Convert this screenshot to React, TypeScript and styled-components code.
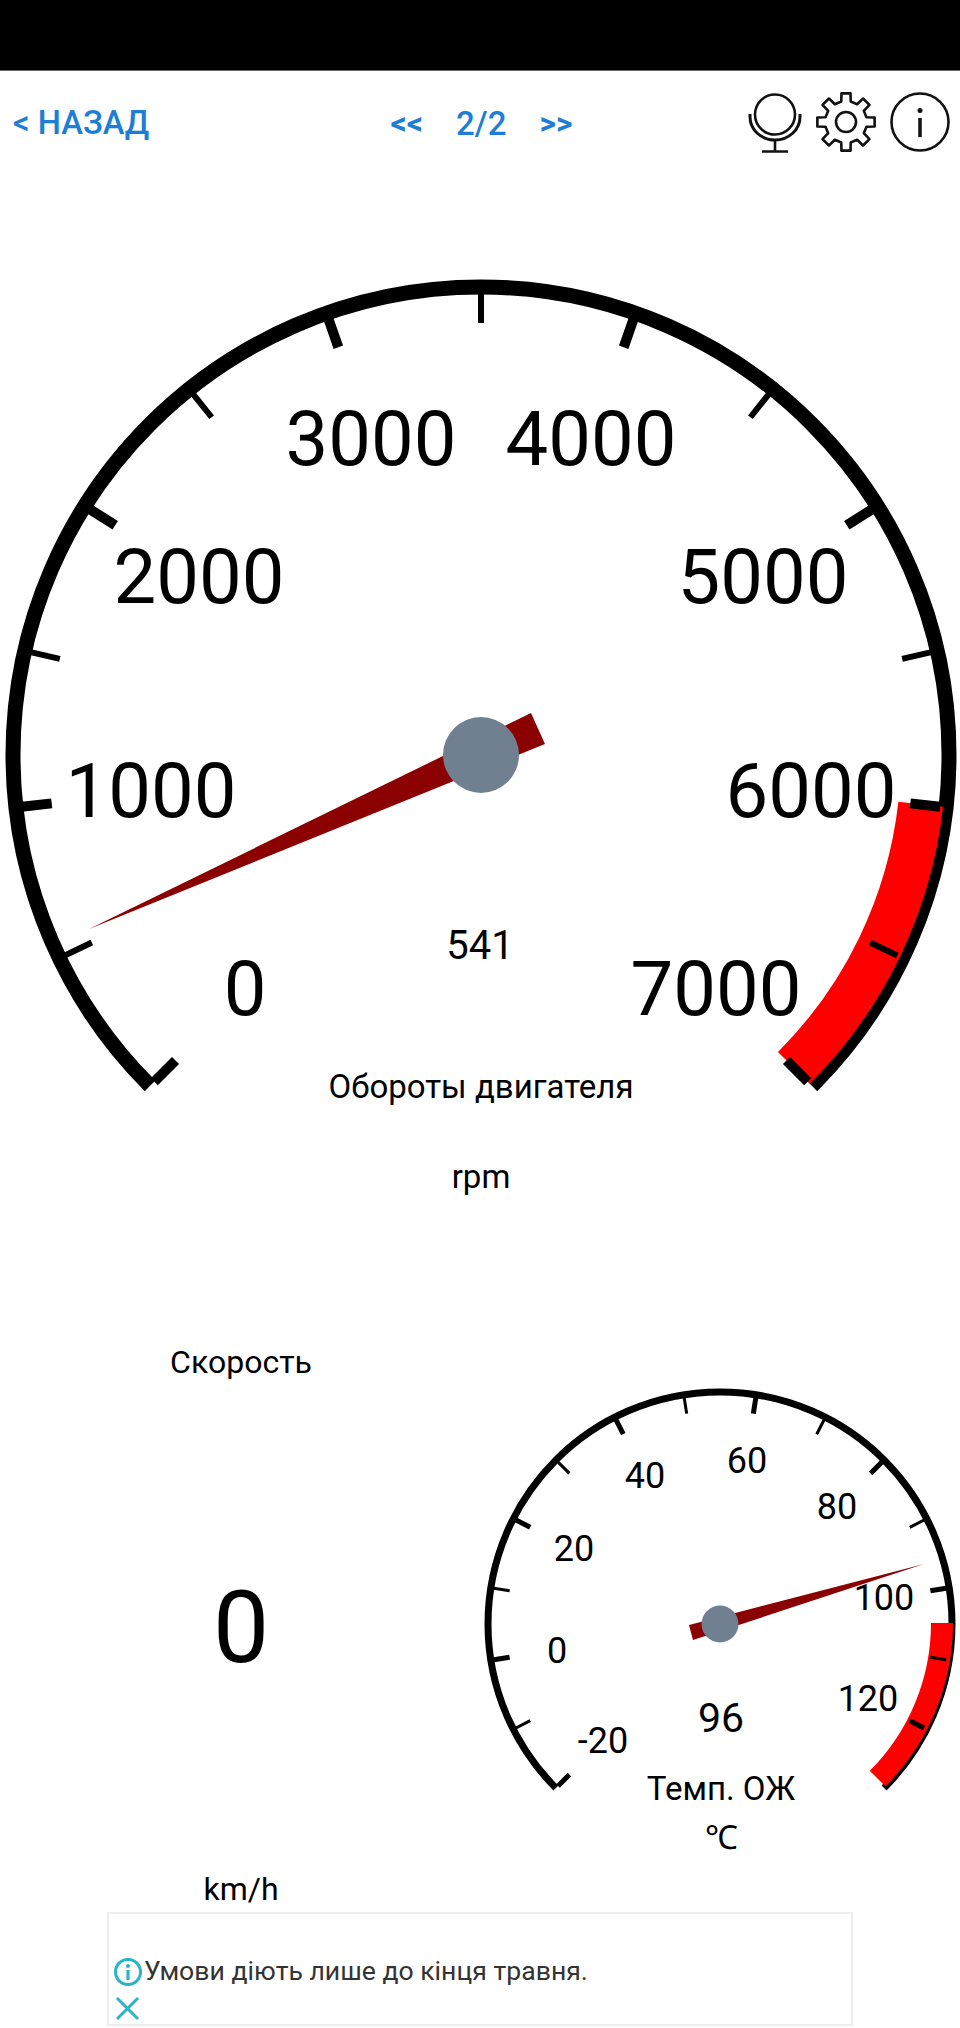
import React from "react";
import styled, { createGlobalStyle } from "styled-components";

const Global = createGlobalStyle`
  html, body { margin: 0; padding: 0; background: #fff; }
  body { font-family: Roboto, "Liberation Sans", sans-serif; color: #000; }
`;

const Page = styled.div`
  width: 960px;
  height: 2028px;
  display: flex;
  flex-direction: column;
  overflow: hidden;
`;
const StatusBar = styled.div`
  height: 70px;
  background: #000;
  border-bottom: 1px solid #666;
`;
const Header = styled.header`
  height: 102px;
  display: grid;
  grid-template-columns: 1fr auto 1fr;
  align-items: center;
  padding: 0 10px 0 13px;
`;
const BackLink = styled.a`
  font-size: 32.7px;
  font-weight: 500;
  color: #1c7ed6;
  white-space: nowrap;
  padding-top: 2px;
`;
const Pager = styled.nav`
  display: flex;
  align-items: center;
  gap: 33px;
  font-size: 33px;
  font-weight: 500;
  color: #1c7ed6;
  padding-top: 2px;
`;
const PagerArrow = styled.span`
  font-size: 32px;
  font-weight: 700;
`;
const IconRow = styled.div`
  display: flex;
  justify-content: flex-end;
  align-items: center;
  gap: 13px;
`;
const Dial = styled.svg`
  display: block;
  flex: none;
`;
const Label = styled.text<{ $size: number }>`
  font-family: Roboto, "Liberation Sans", sans-serif;
  font-size: ${(p) => p.$size}px;
  text-anchor: middle;
  fill: #000;
`;
const LowerRow = styled.section`
  display: flex;
  height: 702px;
`;
const SpeedColumn = styled.div`
  width: 482px;
  flex: none;
  display: flex;
  flex-direction: column;
  align-items: center;
  padding-top: 133px;
  box-sizing: border-box;
`;
const SpeedCaption = styled.div`
  font-size: 32px;
  line-height: 38px;
`;
const SpeedValue = styled.div`
  font-size: 100px;
  line-height: 118px;
  margin: 188px 0 183px;
`;
const AdBox = styled.aside`
  width: 746px;
  height: 114px;
  margin-left: 107px;
  box-sizing: border-box;
  border: 2px solid #eceeef;
  display: flex;
  flex-direction: column;
  justify-content: flex-end;
  padding: 0 0 1px 4px;
`;
const AdLine = styled.div`
  display: flex;
  align-items: center;
  gap: 1px;
  font-size: 26.6px;
  color: #333;
`;
const AdText = styled.span`
  padding-bottom: 3px;
`;
const AdIcon = styled.svg`
  display: block;
  flex: none;
`;

const polar = (cx: number, cy: number, r: number, deg: number) => {
  const a = (deg * Math.PI) / 180;
  return [cx + r * Math.sin(a), cy - r * Math.cos(a)];
};
const arc = (cx: number, cy: number, r: number, from: number, to: number) => {
  const [x1, y1] = polar(cx, cy, r, from);
  const [x2, y2] = polar(cx, cy, r, to);
  return `M${x1} ${y1}A${r} ${r} 0 ${to - from > 180 ? 1 : 0} 1 ${x2} ${y2}`;
};

type L = [string, number, number];

type GaugeProps = {
  cx: number;
  cy: number;
  r: number;
  stroke: number;
  ticks: number;
  steps: number;
  tickOut: number;
  tickIn: number;
  majorW: number;
  minorW: number;
  redDx: number;
  redDy: number;
  redR: number;
  redW: number;
  redFrom: number;
  needle: string;
  hubR: number;
};
const GaugeDrawing = (g: GaugeProps) => (
  <>
    <path d={arc(g.cx, g.cy, g.r, -135, 135)} fill="none" stroke="#000" strokeWidth={g.stroke} />
    <path d={arc(g.cx + g.redDx, g.cy + g.redDy, g.redR, g.redFrom, 135)} fill="none" stroke="#f00" strokeWidth={g.redW} />
    {Array.from({ length: g.ticks }, (_, i) => {
      const deg = -135 + (270 * i) / g.steps;
      const [x1, y1] = polar(g.cx, g.cy, g.tickOut, deg);
      const [x2, y2] = polar(g.cx, g.cy, g.tickIn, deg);
      return <line key={i} x1={x1} y1={y1} x2={x2} y2={y2} stroke="#000" strokeWidth={i % 2 === 0 ? g.majorW : g.minorW} />;
    })}
    <polygon points={g.needle} fill="#8b0000" />
    <circle cx={g.cx} cy={g.cy} r={g.hubR} fill="#708090" />
  </>
);

const bigLabels: L[] = [
  ["3000", 371, 465], ["4000", 591, 465], ["2000", 199, 603], ["5000", 763, 603],
  ["1000", 151, 817], ["6000", 811, 817], ["0", 245, 1015], ["7000", 716, 1015],
];
const smallLabels: L[] = [
  ["60", 747, 1473], ["40", 645, 1488], ["80", 837, 1519], ["20", 574, 1561],
  ["100", 884, 1610], ["0", 557, 1663], ["120", 868, 1711], ["-20", 603, 1753],
];

const gearPath = () => {
  const pts: string[] = [];
  const teeth = 8;
  for (let i = 0; i < teeth; i++) {
    const c = (i * 360) / teeth;
    const seq: [number, number][] = [[21, c - 13], [29, c - 9], [29, c + 9], [21, c + 13]];
    seq.forEach(([r, d]) => {
      const [x, y] = polar(32, 32, r, d);
      pts.push(`${x.toFixed(2)} ${y.toFixed(2)}`);
    });
  }
  return `M${pts.join("L")}Z`;
};

export default function App() {
  return (
    <Page>
      <Global />
      <StatusBar />
      <Header>
        <BackLink>&lt; НАЗАД</BackLink>
        <Pager>
          <PagerArrow>&lt;&lt;</PagerArrow>
          <span>2/2</span>
          <PagerArrow>&gt;&gt;</PagerArrow>
        </Pager>
        <IconRow>
          <svg width="54" height="64" viewBox="0 0 54 64" fill="none" stroke="#111" strokeWidth="2.6">
            <circle cx="27" cy="24.500" r="20" />
            <path d="M2 24v3a25 23 0 0 0 50 0v-3" strokeWidth="3" />
            <path d="M27 50v11M14 61.500h26" />
          </svg>
          <svg width="62" height="64" viewBox="1 0 62 64" fill="none" stroke="#111" strokeWidth="2.6" strokeLinejoin="round">
            <path d={gearPath()} />
            <circle cx="32" cy="32" r="10" />
          </svg>
          <svg width="60" height="64" viewBox="0 0 60 64" fill="none" stroke="#111" strokeWidth="2.6">
            <circle cx="30" cy="32" r="28.500" />
            <circle cx="30" cy="20.500" r="2.500" fill="#111" stroke="none" />
            <path d="M30 28v19" strokeWidth="3.500" />
          </svg>
        </IconRow>
      </Header>
      <Dial width="960" height="1037" viewBox="0 173 960 1037">
        <GaugeDrawing cx={481} cy={755} r={468} stroke={15} ticks={15} steps={14} tickOut={462} tickIn={432} majorW={10} minorW={6}
          redDx={0} redDy={0} redR={442.5} redW={45} redFrom={96.4}
          needle="89,929 531,713 545,744" hubR={38} />
        {bigLabels.map(([t, x, y]) => <Label key={t} $size={76} x={x} y={y}>{t}</Label>)}
        <Label $size={40} x={480} y={959}>541</Label>
        <Label $size={33} x={481} y={1098}>Обороты двигателя</Label>
        <Label $size={33} x={481} y={1188}>rpm</Label>
      </Dial>
      <LowerRow>
        <SpeedColumn>
          <SpeedCaption>Скорость</SpeedCaption>
          <SpeedValue>0</SpeedValue>
          <SpeedCaption>km/h</SpeedCaption>
        </SpeedColumn>
        <Dial width="478" height="702" viewBox="482 1210 478 702">
          <GaugeDrawing cx={720} cy={1624} r={232} stroke={7} ticks={15} steps={15} tickOut={229} tickIn={213} majorW={5} minorW={3}
            redDx={2} redDy={-1} redR={220} redW={22} redFrom={90}
            needle="924,1564 689,1625 693,1640" hubR={18.500} />
          {smallLabels.map(([t, x, y]) => <Label key={t} $size={36} x={x} y={y}>{t}</Label>)}
          <Label $size={41} x={721} y={1732}>96</Label>
          <Label $size={33} x={721} y={1800}>Темп. ОЖ</Label>
          <Label $size={33} x={721} y={1849}>℃</Label>
        </Dial>
      </LowerRow>
      <AdBox>
        <AdLine>
          <AdIcon width="30" height="30" viewBox="0 0 30 30" fill="none" stroke="#2bb3c9" strokeWidth="3">
            <circle cx="15" cy="15" r="12.500" />
            <circle cx="15" cy="9" r="2" fill="#2bb3c9" stroke="none" />
            <path d="M15 13v10" strokeWidth="3.200" />
          </AdIcon>
          <AdText>Умови діють лише до кінця травня.</AdText>
        </AdLine>
        <AdIcon width="30" height="34" viewBox="0 0 30 34" fill="none" stroke="#2bb3c9" strokeWidth="3">
          <path d="M4 9l21 21M25 9L4 30" />
        </AdIcon>
      </AdBox>
    </Page>
  );
}
